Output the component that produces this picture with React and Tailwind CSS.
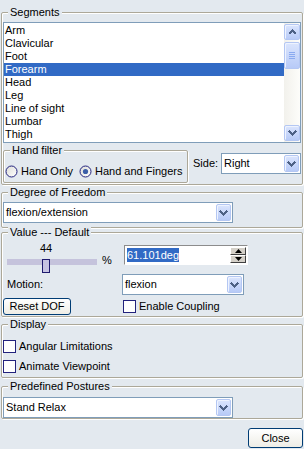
import React from "react";

const segments = [
  "Arm",
  "Clavicular",
  "Foot",
  "Forearm",
  "Head",
  "Leg",
  "Line of sight",
  "Lumbar",
  "Thigh",
];

const GroupBox = ({ title, className = "", children }) => (
  <div
    className={`rounded-[2px] border border-[#aca899] shadow-[inset_1px_1px_0_#fff,1px_1px_0_#fff] ${className}`}
  >
    <div className="-mt-[7px] ml-[6px] w-fit bg-[#e3e9ef] px-[2px] leading-[13px]">
      {title}
    </div>
    {children}
  </div>
);

const Chevron = ({ up = false }) => (
  <svg width="9" height="6" viewBox="0 0 9 6" shapeRendering="crispEdges">
    <path
      d={up ? "M1 5 L4.5 1.5 L8 5" : "M1 1 L4.5 4.5 L8 1"}
      stroke="#4d6185"
      strokeWidth="2"
      fill="none"
    />
  </svg>
);

const BlueBtn = ({ className = "", children }) => (
  <div
    className={`flex items-center justify-center rounded-[2px] border border-[#b4c7f3] bg-linear-to-b from-[#dbe5fd] to-[#b7caf7] shadow-[inset_1px_1px_0_#eef3fe] ${className}`}
  >
    {children}
  </div>
);

const Combo = ({ value, className = "" }) => (
  <div
    className={`flex h-[21px] items-stretch border border-[#7f9db9] bg-white ${className}`}
  >
    <div className="flex flex-1 items-center pl-[2px] leading-[13px]">{value}</div>
    <BlueBtn className="m-[1px] w-[15px]">
      <Chevron />
    </BlueBtn>
  </div>
);

const Radio = ({ checked = false }) => (
  <svg width="13" height="13" viewBox="0 0 13 13" className="shrink-0">
    <defs>
      <linearGradient id="radioFill" x1="0" y1="0" x2="1" y2="1">
        <stop offset="0" stopColor="#dcdcd7" />
        <stop offset="1" stopColor="#ffffff" />
      </linearGradient>
    </defs>
    <circle cx="6.5" cy="6.5" r="5.5" fill="url(#radioFill)" stroke="#22227d" />
    {checked && <circle cx="6.5" cy="6.5" r="2.6" fill="#3b5ea8" />}
  </svg>
);

const Checkbox = () => (
  <div className="h-[13px] w-[13px] shrink-0 border border-[#22227d] bg-white" />
);

const XpButton = ({ className = "", children }) => (
  <div
    className={`flex items-center justify-center rounded-[3px] border border-[#003c74] bg-linear-to-b from-[#ffffff] to-[#eeede6] leading-[13px] ${className}`}
  >
    {children}
  </div>
);

const SpinArrow = ({ up = false }) => (
  <div className="flex flex-1 items-center justify-center border border-t-white border-l-white border-r-[#404040] border-b-[#404040] bg-[#d4d0c8]">
    <svg width="7" height="4" viewBox="0 0 7 4">
      <path d={up ? "M0 4 L3.5 0 L7 4 Z" : "M0 0 L3.5 4 L7 0 Z"} fill="#000" />
    </svg>
  </div>
);

const Scrollbar = () => (
  <div className="flex w-[16px] flex-col bg-linear-to-r from-[#f2f1ec] to-[#fdfdfa] py-[1px]">
    <BlueBtn className="h-[16px]">
      <Chevron up />
    </BlueBtn>
    <BlueBtn className="mt-[2px] h-[27px] flex-col gap-[1px]">
      <div className="h-[1px] w-[6px] bg-[#8aaaf0]" />
      <div className="h-[1px] w-[6px] bg-[#8aaaf0]" />
      <div className="h-[1px] w-[6px] bg-[#8aaaf0]" />
      <div className="h-[1px] w-[6px] bg-[#8aaaf0]" />
    </BlueBtn>
    <div className="flex-1" />
    <BlueBtn className="h-[16px]">
      <Chevron />
    </BlueBtn>
  </div>
);

export default function App() {
  return (
    <div className="flex h-[449px] w-[304px] flex-col overflow-hidden bg-[#e3e9ef] pt-[12px] font-['Liberation_Sans',Arial,sans-serif] text-[11px] text-black">
      {/* Segments */}
      <GroupBox title="Segments" className="ml-[1px] w-[302px] pb-[1px]">
        <div className="ml-[1px] mt-[3px] flex h-[121px] w-[298px] border border-[#7f9db9] bg-white">
          <div className="flex-1 py-[1px]">
            {segments.map((s) => (
              <div
                key={s}
                className={`h-[13px] pl-[1px] leading-[13px] ${
                  s === "Forearm" ? "bg-[#316ac5] text-white" : ""
                }`}
              >
                {s}
              </div>
            ))}
          </div>
          <Scrollbar />
        </div>

        <div className="mt-[7px] flex items-start">
          <GroupBox title="Hand filter" className="ml-[1px] w-[185px] pb-[4px]">
            <div className="mt-[8px] flex h-[13px] items-center pl-[1px]">
              <Radio />
              <span className="ml-[3px] w-[58px] leading-[13px]">Hand Only</span>
              <Radio checked />
              <span className="ml-[3px] leading-[13px]">Hand and Fingers</span>
            </div>
          </GroupBox>
          <div className="ml-[5px] mt-[3px] flex items-center">
            <span className="w-[28px] leading-[13px]">Side:</span>
            <Combo value="Right" className="w-[80px]" />
          </div>
        </div>
      </GroupBox>

      {/* Degree of Freedom */}
      <GroupBox title="Degree of Freedom" className="ml-[1px] mt-[7px] w-[302px] pb-[4px]">
        <Combo value="flexion/extension" className="ml-[1px] mt-[3px] w-[230px]" />
      </GroupBox>

      {/* Value --- Default */}
      <GroupBox title="Value --- Default" className="ml-[1px] mt-[4px] w-[302px] pb-[1px]">
        <div className="mt-[3px] flex items-start">
          <div className="ml-[5px] w-[90px]">
            <div className="pl-[33px] leading-[13px]">44</div>
            <div className="relative h-[14px]">
              <div className="mt-[4px] h-[6px] bg-[#c5c3dc]" />
              <div className="absolute left-[35px] top-0 h-[14px] w-[8px] border border-[#1e1a6e] bg-[#c6c3e2]" />
            </div>
          </div>
          <span className="ml-[5px] mt-[12px] w-[22px] leading-[13px]">%</span>
          <div className="mt-[3px] flex h-[20px] w-[124px] border border-t-[#8c8c8c] border-l-[#8c8c8c] border-r-white border-b-white bg-white">
            <div className="flex flex-1 items-center pl-[2px]">
              <span className="bg-[#316ac5] leading-[14px] text-white">61.101deg</span>
            </div>
            <div className="my-[1px] mr-[1px] flex w-[16px] flex-col">
              <SpinArrow up />
              <SpinArrow />
            </div>
          </div>
        </div>

        <div className="mt-[1px] flex items-center">
          <span className="ml-[5px] w-[115px] leading-[13px]">Motion:</span>
          <Combo value="flexion" className="w-[122px]" />
        </div>

        <div className="mt-[3px] flex items-center">
          <XpButton className="ml-[1px] h-[17px] w-[68px]">Reset DOF</XpButton>
          <div className="ml-[52px] flex items-center">
            <Checkbox />
            <span className="ml-[3px] leading-[13px]">Enable Coupling</span>
          </div>
        </div>
      </GroupBox>

      {/* Display */}
      <GroupBox title="Display" className="ml-[1px] mt-[7px] w-[302px] pb-[4px]">
        <div className="mt-[9px] flex h-[13px] items-center pl-[1px]">
          <Checkbox />
          <span className="ml-[3px] leading-[13px]">Angular Limitations</span>
        </div>
        <div className="mt-[7px] flex h-[13px] items-center pl-[1px]">
          <Checkbox />
          <span className="ml-[3px] leading-[13px]">Animate Viewpoint</span>
        </div>
      </GroupBox>

      {/* Predefined Postures */}
      <GroupBox title="Predefined Postures" className="ml-[1px] mt-[8px] w-[302px]">
        <Combo value="Stand Relax" className="ml-[1px] mt-[4px] w-[230px]" />
      </GroupBox>

      <XpButton className="mr-[1px] mt-[9px] h-[20px] w-[55px] self-end">Close</XpButton>
    </div>
  );
}
